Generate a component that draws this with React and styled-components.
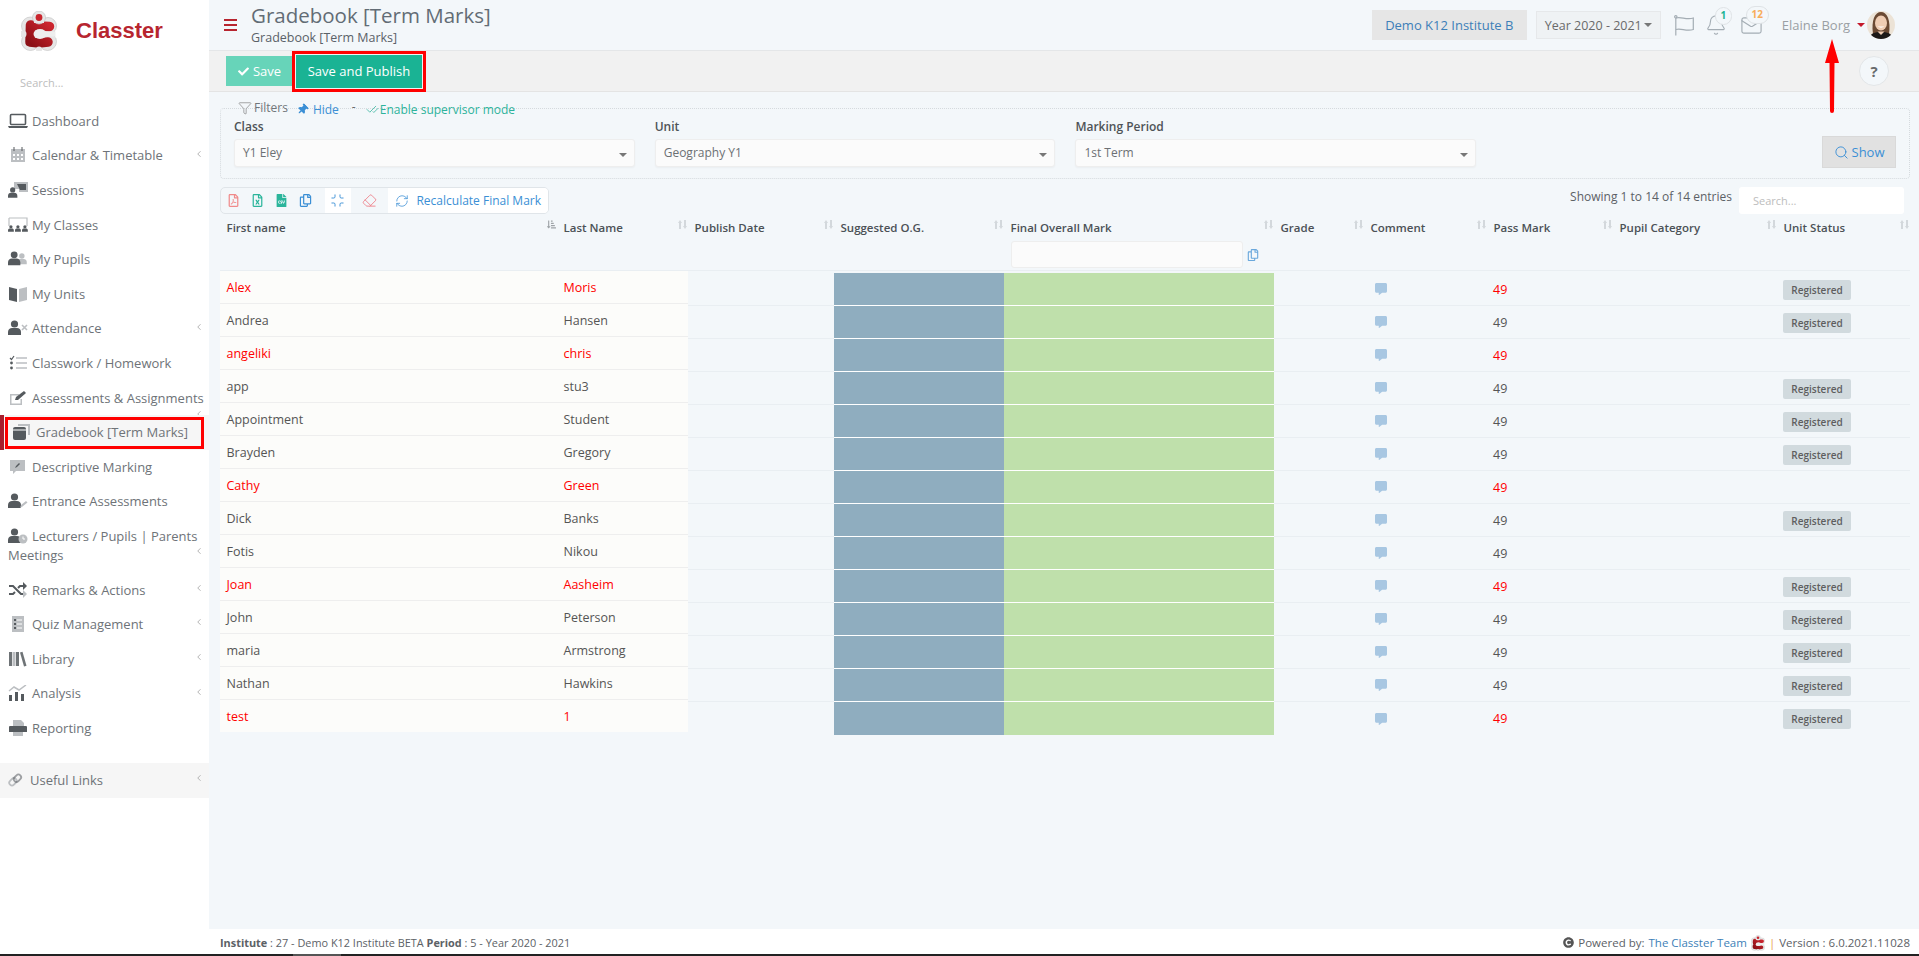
import React from 'react'
import styled, { createGlobalStyle } from 'styled-components'
import {
  Bell,
  CheckCheck,
  ChevronLeft,
  Eraser,
  Filter,
  Mail,
  Minimize,
  RefreshCw,
  Search,
} from 'lucide-react'
import {
  FaCheck,
  FaCommentAlt,
  FaRegCopy,
  FaRegFileExcel,
  FaRegFilePdf,
  FaFileCsv,
  FaThumbtack,
  FaSortAmountDownAlt,
  FaCopyright,
} from 'react-icons/fa'

const GlobalStyle = createGlobalStyle`
  html, body {
    margin: 0;
    height: 100%;
    overflow: hidden;
    background: #f3f7fa;
    font-family: "Open Sans", "Liberation Sans", sans-serif;
    font-size: 13px;
    color: #676a6c;
  }
`

const Page = styled.div`
  position: relative;
  display: flex;
  flex-direction: column;
  height: 956px;
`

const Shell = styled.div`
  flex: 1;
  display: flex;
  min-height: 0;
`

const Sidebar = styled.aside`
  width: 209px;
  flex-shrink: 0;
  background: #fff;
`

const Brand = styled.div`
  display: flex;
  align-items: center;
  height: 62px;
  padding: 0 0 0 21px;
  box-sizing: border-box;
`

const BrandName = styled.span`
  margin-left: 19px;
  font-family: "Liberation Sans", Arial, sans-serif;
  font-size: 22px;
  font-weight: 700;
  color: #b7252f;
`

const SideSearch = styled.div`
  height: 42px;
  padding: 13px 0 0 20px;
  box-sizing: border-box;
  font-size: 11px;
  color: #bdbdbd;
`

const NavItem = styled.div`
  position: relative;
  padding: 7.8px 4px 7.8px 8px;
  line-height: 19px;
  color: #6e7378;
  font-size: 13px;
  background: ${p => (p.$active ? '#f6f6f6' : 'transparent')};
  border-left: ${p => (p.$active ? '4px solid #a81f2d' : 'none')};

  &::after {
    content: ${p => (p.$active ? '""' : 'none')};
    position: absolute;
    top: 2px;
    right: 5px;
    bottom: 1px;
    left: 1px;
    border: 3px solid #f00;
  }
`

const LinksItem = styled(NavItem)`
  margin-top: 17.5px;
  background: #f6f6f6;
`

const NavGlyph = styled.svg`
  width: ${p => p.$width || 20}px;
  height: 16px;
  margin-right: 4px;
  vertical-align: -3px;
`

const NavChevron = styled(ChevronLeft)`
  position: absolute;
  top: ${p => p.$top}px;
  right: 5px;
  width: 10px;
  height: 10px;
  color: #a5a5a5;
`

const Main = styled.main`
  flex: 1;
  min-width: 0;
  display: flex;
  flex-direction: column;
`

const TopBar = styled.header`
  display: flex;
  align-items: center;
  height: 50px;
  padding: 0 24px 0 15px;
  border-bottom: 1px solid #e4e6e8;
`

const Burger = styled.div`
  display: flex;
  flex-direction: column;
  gap: 2.5px;
  width: 13px;
  margin-right: 14px;

  span {
    height: 2.5px;
    background: #b7252f;
  }
`

const Titles = styled.div`
  flex: 1;
  margin-top: -2px;
`

const PageTitle = styled.div`
  font-size: 20.5px;
  line-height: 27px;
  color: #626c75;
`

const Crumb = styled.div`
  font-size: 12.5px;
  line-height: 17px;
  color: #5a6168;
`

const InstituteButton = styled.div`
  width: 155px;
  height: 30px;
  line-height: 30px;
  text-align: center;
  background: #e6e6e6;
  color: #3d7fb8;
`

const YearSelect = styled.div`
  display: flex;
  align-items: center;
  justify-content: space-between;
  width: 125px;
  height: 28px;
  margin-left: 9px;
  padding: 0 8px;
  box-sizing: border-box;
  background: #eff2f4;
  border: 1px solid #e6e8ea;
  font-size: 12.5px;
  white-space: nowrap;
  color: #6a6a6a;
`

const Caret = styled.i`
  width: 0;
  height: 0;
  border-left: 4px solid transparent;
  border-right: 4px solid transparent;
  border-top: 4px solid ${p => p.$color || '#777'};
`

const TopIcon = styled.div`
  position: relative;
  display: flex;
  color: #a4adb4;
  margin-left: ${p => p.$gap}px;
`

const CountBadge = styled.span`
  position: absolute;
  top: ${p => p.$top}px;
  left: ${p => p.$left}px;
  min-width: 15px;
  height: 16px;
  padding: 0 ${p => p.$pad}px;
  line-height: 15px;
  text-align: center;
  font-size: 10px;
  font-weight: 700;
  color: ${p => p.$color};
  background: #f3f7fa;
  border: 1px solid #dfe3e6;
  border-radius: 9px;
  box-sizing: content-box;
`

const UserName = styled.span`
  margin-left: 19px;
  margin-top: -1px;
  color: #9a9fa4;
`

const UserCaret = styled(Caret)`
  margin: 0 2px 0 7px;
`

const ActionBar = styled.div`
  display: flex;
  align-items: center;
  height: 41px;
  padding: 0 30px 0 17px;
  box-sizing: border-box;
  background: #f1f1f1;
  border-bottom: 1px solid #e4e4e4;
`

const SaveButton = styled.div`
  display: flex;
  align-items: center;
  justify-content: center;
  gap: 4px;
  width: 67px;
  height: 30px;
  background: #67d4b9;
  color: #fff;
`

const PublishFrame = styled.div`
  margin-left: -1px;
  padding: 1px;
  border: 3px solid #f00;
`

const PublishButton = styled.div`
  width: 126px;
  height: 33px;
  line-height: 33px;
  text-align: center;
  background: #1ab394;
  color: #fff;
`

const HelpButton = styled.div`
  width: 30px;
  height: 30px;
  margin-left: auto;
  line-height: 28px;
  text-align: center;
  box-sizing: border-box;
  border: 1px solid #e3e6e8;
  border-radius: 50%;
  background: #f3f7fa;
  color: #676a6c;
  font-size: 15px;
  font-weight: 700;
`

const Content = styled.div`
  flex: 1;
  padding: 8px 9px 0 11px;
`

const FilterHead = styled.div`
  position: relative;
  display: flex;
  align-items: center;
  height: 16px;
  padding-left: 18px;
  font-size: 12px;
`

const FilterLabel = styled.span`
  margin: -2px 9px 0 2px;
  color: #71767a;
`

const HideLink = styled.span`
  display: flex;
  align-items: center;
  gap: 5px;
  margin-top: 2px;
  color: #3b8fd5;
`

const Dash = styled.span`
  margin: -4px 10px 0 13px;
`

const SupervisorLink = styled.span`
  display: flex;
  align-items: center;
  gap: 1px;
  margin-top: 2px;
  color: #2db39b;
`

const FilterBox = styled.section`
  display: flex;
  gap: 20px;
  margin-top: -8px;
  padding: 11px 13px 11px 13px;
  border: 1px dotted #d5dade;
  border-radius: 4px;
`

const Field = styled.div`
  width: 400.7px;
`

const FieldLabel = styled.div`
  height: 19px;
  line-height: 13px;
  font-size: 12px;
  font-weight: 600;
  color: #4e5357;
`

const SelectBox = styled.div`
  display: flex;
  align-items: center;
  justify-content: space-between;
  height: 28px;
  padding: 0 7px 2px 8px;
  box-sizing: border-box;
  background: #fbfbfb;
  border: 1px solid #eeeeee;
  border-radius: 3px;
  box-shadow: 0 1px 2px rgba(0, 0, 0, 0.04);
  font-size: 12px;
  color: #6c7074;
`

const SelectCaret = styled(Caret)`
  margin-top: 6px;
  color: #888;
`

const ShowButton = styled.div`
  display: flex;
  align-items: center;
  justify-content: center;
  gap: 3px;
  width: 74px;
  height: 32px;
  margin: auto 0 -1px auto;
  background: #e1e1e1;
  border: 1px solid #d9d9d9;
  box-sizing: border-box;
  color: #3b8fd5;
`

const TableBar = styled.div`
  display: flex;
  align-items: center;
  height: 27px;
  margin-top: 8px;
`

const ToolGroup = styled.div`
  display: flex;
  align-items: center;
  width: 329px;
  height: 27px;
  box-sizing: border-box;
  padding-left: 1px;
  border: 1px solid #e0e5e9;
  border-radius: 5px;
  overflow: hidden;
`

const ToolIcon = styled.span`
  display: flex;
  justify-content: center;
  width: 24px;
  color: ${p => p.$color};
  font-size: 13px;
`

const ToolPane = styled.div`
  display: flex;
  align-items: center;
  justify-content: center;
  align-self: stretch;
  width: ${p => p.$width}px;
  margin-left: ${p => p.$left || 0}px;
  gap: 7px;
  background: ${p => (p.$white ? '#fff' : 'transparent')};
  color: ${p => p.$color};
  font-size: 12px;
`

const EntryCount = styled.div`
  margin: -8px 7px 0 auto;
  font-size: 12px;
  color: #5c6166;
`

const TableSearch = styled.div`
  width: 165px;
  height: 27px;
  margin-right: 6px;
  padding: 6px 14px;
  box-sizing: border-box;
  background: #fff;
  border-radius: 3px;
  font-size: 11px;
  color: #bdbdbd;
`

const frozenColumns = '337px 131px'
const restColumns = '146px 170px 270px 90px 123px 126px 164px 133px'

const HeaderRow = styled.div`
  display: grid;
  grid-template-columns: ${frozenColumns} ${restColumns};
  height: 56px;
  border-bottom: 1px solid #e9eef2;
`

const HeaderCell = styled.div`
  display: flex;
  flex-wrap: wrap;
  align-content: flex-start;
  justify-content: space-between;
  padding: 6px 1px 0 6.5px;
  font-size: 11.5px;
  font-weight: 600;
  line-height: 16px;
  color: #4b5156;
`

const SortMark = styled.svg`
  width: 9px;
  height: 9px;
  color: #d3d8dc;
`

const SortedMark = styled(FaSortAmountDownAlt)`
  width: 9px;
  height: 9px;
  color: #9ea3a7;
`

const MarkEntry = styled.div`
  display: flex;
  align-items: center;
  flex-basis: 100%;
  gap: 4px;
  margin: 5px 0 0 0.5px;
`

const MarkInput = styled.div`
  width: 232px;
  height: 27px;
  box-sizing: border-box;
  background: #fbfbfb;
  border: 1px solid #eeeeee;
  border-radius: 3px;
`

const TableBody = styled.div`
  display: flex;
  align-items: flex-start;
  font-size: 12.5px;
`

const FrozenPane = styled.div`
  width: 468px;
  flex-shrink: 0;
  background: #fcfcfa;
`

const FrozenRow = styled.div`
  display: grid;
  grid-template-columns: ${frozenColumns};
  height: 33px;
  line-height: 34px;
  border-bottom: 1px solid #eeeeee;
  box-sizing: border-box;
  color: ${p => (p.$flag ? '#f00' : '#555')};

  &:last-child {
    height: 32px;
    border-bottom: none;
  }
`

const NameCell = styled.div`
  padding-left: 6.5px;
`

const RestPane = styled.div`
  flex: 1;
  margin-top: 2px;
`

const RestRow = styled.div`
  display: grid;
  grid-template-columns: ${restColumns};
  height: 33px;

  &:last-child > div {
    border-bottom: none;
  }
`

const DataCell = styled.div`
  display: flex;
  align-items: center;
  padding-left: ${p => p.$pad || 6}px;
  box-sizing: border-box;
  background: ${p => p.$fill || 'transparent'};
  border-bottom: 1px solid ${p => (p.$fill ? '#fff' : '#e9eef2')};
  color: ${p => (p.$flag ? '#f00' : '#555')};
`

const CommentIcon = styled(FaCommentAlt)`
  width: 12px;
  height: 12px;
  color: #a8c7e2;
`

const StatusBadge = styled.span`
  width: 68px;
  height: 20px;
  margin-top: 1px;
  line-height: 20px;
  text-align: center;
  background: #d1dade;
  border-radius: 2px;
  font-size: 10px;
  font-weight: 600;
  color: #5e5e5e;
`

const Footer = styled.footer`
  display: flex;
  align-items: center;
  justify-content: space-between;
  height: 25px;
  padding: 2px 9px 0 11px;
  box-sizing: border-box;
  background: #fff;
  font-size: 10.9px;
  color: #5c6166;

  b {
    font-weight: 700;
  }
`

const Powered = styled.div`
  display: flex;
  align-items: center;
  gap: 4px;
  font-size: 11.5px;

  a {
    color: #3d7fb8;
  }

  i {
    font-style: normal;
    color: #e8a04c;
  }
`

const ScrollTrack = styled.div`
  height: 2px;
  padding-left: 293px;
  background: #222;
`

const ScrollThumb = styled.div`
  width: 48px;
  height: 2px;
  background: #555;
`

const ArrowMark = styled.svg`
  position: absolute;
  top: 39px;
  right: 80px;
  width: 14px;
  height: 75px;
`

const dark = '#555a5e'
const light = '#bcbfc2'

const Person = ({ x = 0, y = 0, s = 1, fill = dark }) => (
  <g transform={`translate(${x} ${y}) scale(${s})`} fill={fill}>
    <circle cx="6.5" cy="4" r="3.6" />
    <path d="M0 15v-3c0-2.6 2-4 4-4h5c2 0 4 1.4 4 4v3z" />
  </g>
)

const navIcons = {
  laptop: (
    <>
      <rect x="2.5" y="1.5" width="15" height="10" rx="1" fill="none" stroke={dark} strokeWidth="1.6" />
      <path d="M0 13h20l-1 2H1z" fill={dark} />
    </>
  ),
  calendar: (
    <>
      <path d="M3 2h14v13H3z" fill={light} />
      <path d="M5 0h2v4H5zM13 0h2v4h-2z" fill={dark} opacity="0.5" />
      <path d="M5 7h2v2H5zM9 7h2v2H9zM13 7h2v2h-2zM5 11h2v2H5zM9 11h2v2H9zM13 11h2v2h-2z" fill="#fff" />
    </>
  ),
  sessions: (
    <>
      <path d="M6 0h14v10H11V7H6z" fill={light} />
      <path d="M9 2h9v6h-6z" fill={dark} />
      <Person y="5" s="0.72" />
    </>
  ),
  classes: (
    <>
      <path d="M1 1h18v8" fill="none" stroke={light} strokeWidth="1.2" />
      <path d="M1 1v8" stroke={light} strokeWidth="1.2" />
      <Person x="0" y="8" s="0.45" />
      <Person x="7" y="8" s="0.45" />
      <Person x="14" y="8" s="0.45" />
    </>
  ),
  pupils: (
    <>
      <Person x="9" y="2" s="0.75" fill={light} />
      <Person y="0" s="0.95" />
    </>
  ),
  book: (
    <>
      <path d="M1 1l8 2v13l-8-2z" fill={dark} />
      <path d="M19 1l-8 2v13l8-2z" fill={light} />
    </>
  ),
  attendance: (
    <>
      <Person s="1" />
      <path d="M14 5l5 5M19 5l-5 5" stroke={light} strokeWidth="1.6" />
    </>
  ),
  tasks: (
    <>
      <path d="M8 3h11M8 8h11M8 13h11" stroke={light} strokeWidth="1.6" />
      <path d="M2 3l1.5 1.5L6 1" fill="none" stroke={dark} strokeWidth="1.2" />
      <circle cx="3.5" cy="8" r="1.4" fill={dark} />
      <circle cx="3.5" cy="13" r="1.4" fill={dark} />
    </>
  ),
  edit: (
    <>
      <path d="M2 4h9v1.5H3.500v8h9V9H14v6H2z" fill={light} />
      <path d="M7 10l1-3 8-6 2 2-8 7z" fill={dark} />
    </>
  ),
  gradebook: (
    <>
      <path d="M6 0h12v11h-2V2H6z" fill={light} />
      <rect x="1" y="3" width="13" height="13" rx="2" fill={dark} />
      <path d="M1 6h13" stroke="#fff" strokeWidth="1" />
    </>
  ),
  marking: (
    <>
      <path d="M2 1h15v11H8l-3 3v-3H2z" fill={light} />
      <path d="M7 9l1-2 3-3 1 1-3 3z" fill={dark} />
    </>
  ),
  entrance: (
    <>
      <Person />
      <path d="M12 15l1-3 5-4 1.500 1.500-5 4z" fill={light} />
    </>
  ),
  lecturers: (
    <>
      <Person />
      <circle cx="15" cy="11" r="4.500" fill={light} />
      <path d="M15 8.500V11h2" stroke="#fff" strokeWidth="1" fill="none" />
    </>
  ),
  random: (
    <>
      <path d="M1 4h4l8 8h3" fill="none" stroke={dark} strokeWidth="2" />
      <path d="M1 12h4l2-2M10 6l2-2h4" fill="none" stroke={dark} strokeWidth="2" />
      <path d="M15 0l4 4-4 4z" fill={dark} />
      <path d="M15 8l4 4-4 4z" fill={light} />
    </>
  ),
  quiz: (
    <>
      <path d="M4 0h12v16H4z" fill={light} />
      <path d="M9 4h5M9 8h5M9 12h5" stroke="#fff" strokeWidth="1" />
      <path d="M6 3h2v2H6zM6 7h2v2H6zM6 11h2v2H6z" fill={dark} />
    </>
  ),
  library: (
    <>
      <path d="M1 1h3v14H1zM8 1h3v14H8z" fill={dark} opacity="0.85" />
      <path d="M4.500 1h3v14h-3z" fill={light} />
      <path d="M12 1.500l2.500-.8 4 14-2.500.8z" fill={dark} opacity="0.85" />
    </>
  ),
  analysis: (
    <>
      <path d="M1 10h3v6H1zM7 7h3v9H7zM13 9h3v7h-3z" fill={dark} />
      <path d="M1 6l5-4 5 3 7-5" fill="none" stroke={light} strokeWidth="1.500" />
    </>
  ),
  printer: (
    <>
      <path d="M5 0h8l3 3v3H5z" fill={light} />
      <path d="M2 6h16a1 1 0 0 1 1 1v5H1V7a1 1 0 0 1 1-1z" fill={dark} />
      <path d="M5 12h10v4H5z" fill={light} />
    </>
  ),
  link: (
    <g fill="none" stroke={light} strokeWidth="2">
      <rect x="1" y="7" width="9" height="6" rx="3" transform="rotate(-45 5.500 10)" />
      <rect x="6" y="3" width="9" height="6" rx="3" transform="rotate(-45 10.500 6)" stroke={dark} strokeOpacity="0.55" />
    </g>
  ),
}

const navItems = [
  { label: 'Dashboard', icon: 'laptop' },
  { label: 'Calendar & Timetable', icon: 'calendar', chevron: 10 },
  { label: 'Sessions', icon: 'sessions' },
  { label: 'My Classes', icon: 'classes' },
  { label: 'My Pupils', icon: 'pupils' },
  { label: 'My Units', icon: 'book' },
  { label: 'Attendance', icon: 'attendance', chevron: 10 },
  { label: 'Classwork / Homework', icon: 'tasks' },
  { label: 'Assessments & Assignments', icon: 'edit', chevron: 28 },
  { label: 'Gradebook [Term Marks]', icon: 'gradebook', active: true },
  { label: 'Descriptive Marking', icon: 'marking' },
  { label: 'Entrance Assessments', icon: 'entrance' },
  { label: 'Lecturers / Pupils | Parents Meetings', icon: 'lecturers', chevron: 27 },
  { label: 'Remarks & Actions', icon: 'random', chevron: 10 },
  { label: 'Quiz Management', icon: 'quiz', chevron: 10 },
  { label: 'Library', icon: 'library', chevron: 10 },
  { label: 'Analysis', icon: 'analysis', chevron: 10 },
  { label: 'Reporting', icon: 'printer' },
]

const pupils = [
  ['Alex', 'Moris', true, true],
  ['Andrea', 'Hansen', false, true],
  ['angeliki', 'chris', true, false],
  ['app', 'stu3', false, true],
  ['Appointment', 'Student', false, true],
  ['Brayden', 'Gregory', false, true],
  ['Cathy', 'Green', true, false],
  ['Dick', 'Banks', false, true],
  ['Fotis', 'Nikou', false, false],
  ['Joan', 'Aasheim', true, true],
  ['John', 'Peterson', false, true],
  ['maria', 'Armstrong', false, true],
  ['Nathan', 'Hawkins', false, true],
  ['test', '1', true, true],
]

const columns = [
  'First name',
  'Last Name',
  'Publish Date',
  'Suggested O.G.',
  'Final Overall Mark',
  'Grade',
  'Comment',
  'Pass Mark',
  'Pupil Category',
  'Unit Status',
]

function Logo({ width, height }) {
  return (
    <svg width={width} height={height} viewBox="0 0 36 40">
      <defs>
        <linearGradient id="logoRed" x1="0" y1="1" x2="1" y2="0">
          <stop offset="0" stopColor="#8c1016" />
          <stop offset="1" stopColor="#cb252e" />
        </linearGradient>
      </defs>
      <g fill="#e6e6e6" stroke="#c6c6c6" strokeWidth="0.7">
        <circle cx="9.500" cy="15" r="9" />
        <circle cx="27" cy="15" r="8.500" />
        <circle cx="9.500" cy="30.500" r="9" />
        <circle cx="26.500" cy="30.500" r="9" />
      </g>
      <path d="M8 12h20v20H8z" fill="#e6e6e6" />
      <path
        d="M28.500 15.500L18 15L9.500 14L9 31L18 32L27 31"
        fill="none"
        stroke="url(#logoRed)"
        strokeWidth="9.500"
        strokeLinecap="round"
        strokeLinejoin="round"
      />
      <circle cx="18" cy="6.500" r="6.500" fill="#e6e6e6" stroke="#c6c6c6" strokeWidth="0.7" />
      <path d="M13 9h10v3H13z" fill="#e6e6e6" />
      <circle cx="18" cy="6.500" r="3.400" fill="#c9252d" />
      <circle cx="2" cy="23" r="3.500" fill="#e6e6e6" />
      <circle cx="18" cy="38.500" r="3" fill="#e6e6e6" />
      <ellipse cx="19" cy="23" rx="6.500" ry="5" fill="#eeeeee" />
      <path d="M19 20.500h17v5H19z" fill="#eeeeee" />
      <path d="M34.500 19h1.500v8h-1.500z" fill="#fff" />
    </svg>
  )
}

function Avatar() {
  return (
    <svg width="28" height="28" viewBox="0 0 28 28">
      <clipPath id="avatarClip">
        <circle cx="14" cy="14" r="14" />
      </clipPath>
      <g clipPath="url(#avatarClip)">
        <rect width="28" height="28" fill="#ece3d6" />
        <path d="M6 23C4 9 8 1 14 1s10 8 8 22z" fill="#6b4a33" />
        <ellipse cx="14" cy="12" rx="6" ry="7.500" fill="#efcdb3" />
        <path d="M10.500 15q3.500 3.500 7 0q-3.500 1-7 0z" fill="#fff" />
        <path d="M2 28c1-6 6-7 12-7s11 1 12 7z" fill="#1d1a18" />
        <path d="M10.500 20.500l3.500 3.500 3.500-3.500z" fill="#efcdb3" />
      </g>
    </svg>
  )
}

function FlagIcon() {
  return (
    <svg width="20" height="21" viewBox="0 0 20 21" fill="none" stroke="currentColor" strokeWidth="1.2">
      <circle cx="1.800" cy="1.800" r="1.200" />
      <path d="M1.800 3v17.500" />
      <path d="M1.800 3c5-1.800 10.500 2.200 17.500 0v11.500c-7 2.200-12.500-1.800-17.500 0" />
    </svg>
  )
}

function SortIcon() {
  return (
    <SortMark viewBox="0 0 9 9" fill="currentColor">
      <path d="M2 0l2 3H3v6H1V3H0zM7 9L5 6h1V0h2v6h1z" />
    </SortMark>
  )
}

export default function App() {
  return (
    <Page>
      <GlobalStyle />
      <Shell>
        <Sidebar>
          <Brand>
            <Logo width={36} height={40} />
            <BrandName>Classter</BrandName>
          </Brand>
          <SideSearch>Search...</SideSearch>
          <nav>
            {navItems.map(item => (
              <NavItem key={item.label} $active={item.active}>
                <NavGlyph viewBox="0 0 20 16">{navIcons[item.icon]}</NavGlyph>
                {item.label}
                {item.chevron && <NavChevron $top={item.chevron} />}
              </NavItem>
            ))}
            <LinksItem>
              <NavGlyph viewBox="0 0 20 16" $width={18}>
                {navIcons.link}
              </NavGlyph>
              Useful Links
              <NavChevron $top={10} />
            </LinksItem>
          </nav>
        </Sidebar>

        <Main>
          <TopBar>
            <Burger>
              <span />
              <span />
              <span />
            </Burger>
            <Titles>
              <PageTitle>Gradebook [Term Marks]</PageTitle>
              <Crumb>Gradebook [Term Marks]</Crumb>
            </Titles>
            <InstituteButton>Demo K12 Institute B</InstituteButton>
            <YearSelect>
              Year 2020 - 2021
              <Caret />
            </YearSelect>
            <TopIcon $gap={13}>
              <FlagIcon />
            </TopIcon>
            <TopIcon $gap={11}>
              <Bell size={22} strokeWidth={1.2} />
              <CountBadge $top={-7} $left={10} $pad={0} $color="#1ab394">
                1
              </CountBadge>
            </TopIcon>
            <TopIcon $gap={13}>
              <Mail size={23} strokeWidth={1.2} />
              <CountBadge $top={-8} $left={6} $pad={3} $color="#f8ac59">
                12
              </CountBadge>
            </TopIcon>
            <UserName>Elaine Borg</UserName>
            <UserCaret $color="#c4182a" />
            <Avatar />
          </TopBar>

          <ActionBar>
            <SaveButton>
              <FaCheck size={11} />
              Save
            </SaveButton>
            <PublishFrame>
              <PublishButton>Save and Publish</PublishButton>
            </PublishFrame>
            <HelpButton>?</HelpButton>
          </ActionBar>

          <Content>
            <FilterHead>
              <Filter size={14} strokeWidth={1.1} color="#777" />
              <FilterLabel>Filters</FilterLabel>
              <HideLink>
                <FaThumbtack size={11} style={{ transform: 'rotate(45deg)' }} />
                Hide
              </HideLink>
              <Dash>-</Dash>
              <SupervisorLink>
                <CheckCheck size={13} strokeWidth={1.4} />
                Enable supervisor mode
              </SupervisorLink>
            </FilterHead>
            <FilterBox>
              <Field>
                <FieldLabel>Class</FieldLabel>
                <SelectBox>
                  Y1 Eley
                  <SelectCaret />
                </SelectBox>
              </Field>
              <Field>
                <FieldLabel>Unit</FieldLabel>
                <SelectBox>
                  Geography Y1
                  <SelectCaret />
                </SelectBox>
              </Field>
              <Field>
                <FieldLabel>Marking Period</FieldLabel>
                <SelectBox>
                  1st Term
                  <SelectCaret />
                </SelectBox>
              </Field>
              <ShowButton>
                <Search size={15} strokeWidth={1.5} />
                Show
              </ShowButton>
            </FilterBox>

            <TableBar>
              <ToolGroup>
                <ToolIcon $color="#f08a8a">
                  <FaRegFilePdf />
                </ToolIcon>
                <ToolIcon $color="#2bb59b">
                  <FaRegFileExcel />
                </ToolIcon>
                <ToolIcon $color="#2bb59b">
                  <FaFileCsv />
                </ToolIcon>
                <ToolIcon $color="#3b8fd5">
                  <FaRegCopy />
                </ToolIcon>
                <ToolPane $width={26} $left={7} $white $color="#3b8fd5">
                  <Minimize size={15} strokeWidth={1.5} />
                </ToolPane>
                <ToolPane $width={38} $color="#ee7f88">
                  <Eraser size={15} strokeWidth={1.4} />
                </ToolPane>
                <ToolPane $width={160} $white $color="#3b8fd5">
                  <RefreshCw size={14} strokeWidth={1.3} />
                  Recalculate Final Mark
                </ToolPane>
              </ToolGroup>
              <EntryCount>Showing 1 to 14 of 14 entries</EntryCount>
              <TableSearch>Search...</TableSearch>
            </TableBar>

            <HeaderRow>
              {columns.map((name, index) => (
                <HeaderCell key={name}>
                  {name}
                  {index === 0 ? <SortedMark /> : <SortIcon />}
                  {name === 'Final Overall Mark' && (
                    <MarkEntry>
                      <MarkInput />
                      <FaRegCopy size={12} color="#6aa8dc" />
                    </MarkEntry>
                  )}
                </HeaderCell>
              ))}
            </HeaderRow>

            <TableBody>
              <FrozenPane>
                {pupils.map(([first, last, flag]) => (
                  <FrozenRow key={first} $flag={flag}>
                    <NameCell>{first}</NameCell>
                    <NameCell>{last}</NameCell>
                  </FrozenRow>
                ))}
              </FrozenPane>
              <RestPane>
                {pupils.map(([first, , flag, registered]) => (
                  <RestRow key={first}>
                    <DataCell />
                    <DataCell $fill="#8fadbf" />
                    <DataCell $fill="#bfe0ab" />
                    <DataCell />
                    <DataCell $pad={11}>
                      <CommentIcon />
                    </DataCell>
                    <DataCell $flag={flag}>49</DataCell>
                    <DataCell />
                    <DataCell>{registered && <StatusBadge>Registered</StatusBadge>}</DataCell>
                  </RestRow>
                ))}
              </RestPane>
            </TableBody>
          </Content>

          <Footer>
            <div>
              <b>Institute</b> : 27 - Demo K12 Institute BETA <b>Period</b> : 5 - Year 2020 - 2021
            </div>
            <Powered>
              <FaCopyright size={11} color="#555" />
              Powered by: <a>The Classter Team</a>
              <Logo width={14} height={16} />
              <i>|</i> Version : 6.0.2021.11028
            </Powered>
          </Footer>
        </Main>
      </Shell>
      <ScrollTrack>
        <ScrollThumb />
      </ScrollTrack>

      <ArrowMark viewBox="0 0 14 75">
        <path d="M7 0l7 24H9.500l-.5 48a2 2 0 0 1-4 0l-.5-48H0z" fill="#f00" />
      </ArrowMark>
    </Page>
  )
}
